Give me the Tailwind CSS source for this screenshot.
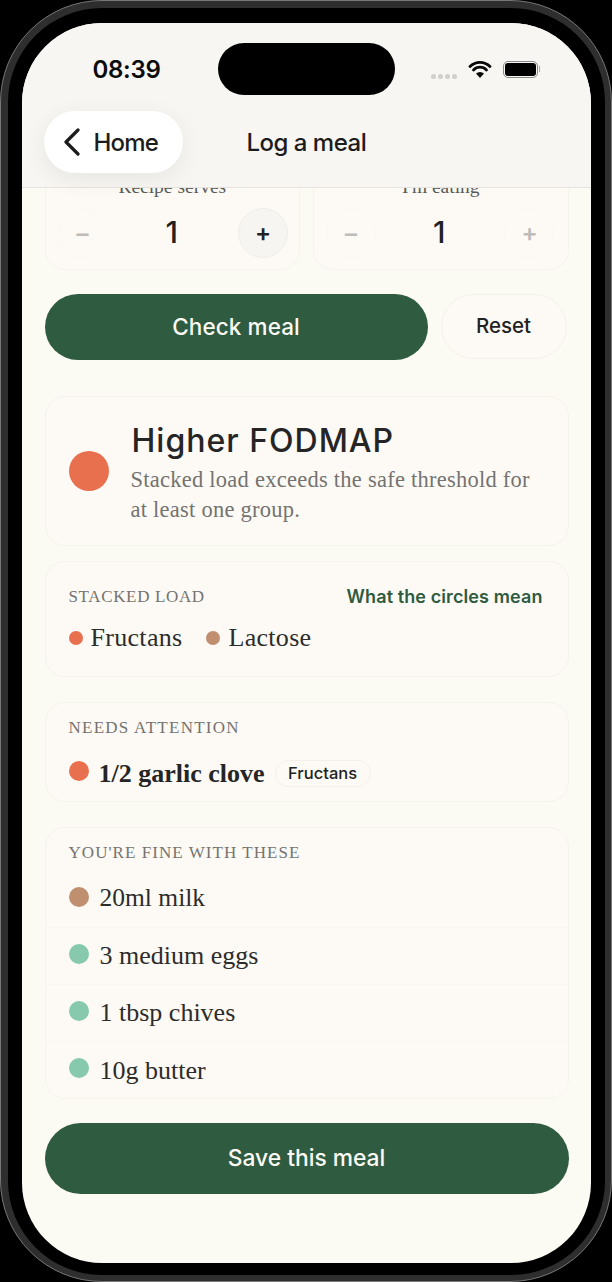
<!doctype html>
<html><head><meta charset="utf-8"><script src="https://cdn.jsdelivr.net/npm/@tailwindcss/browser@4"></script></head>
<body class="bg-black">
<div class="w-[612px] h-[1282px] rounded-[102px] border-[1.5px] border-[#777] bg-[#2e2e2e] p-[6.5px]">
<div class="h-full rounded-[94px] bg-black pl-[14px] pr-[14px] pt-[15px] pb-[12px]">
<div class="h-full rounded-[80px] overflow-hidden bg-[#fbfaf3] flex flex-col relative">
  <header class="h-[165px] shrink-0 bg-[#f7f6f2] border-b border-[#e4e3de] relative z-10 flex flex-col">
    <div class="h-[88px] shrink-0 flex items-start relative">
      <span class="absolute left-[71px] top-[30px] font-['Inter',sans-serif] font-semibold text-[24px] tracking-[-0.3px] leading-[34px] text-[#0b0b0b]">08:39</span>
      <div class="absolute left-[196px] top-[20px] w-[177px] h-[52px] rounded-full bg-black"></div>
      <div class="absolute left-[409px] top-[51px] flex gap-[2px]">
        <i class="w-[5px] h-[5px] rounded-full bg-[#cfcfcc]"></i><i class="w-[5px] h-[5px] rounded-full bg-[#cfcfcc]"></i><i class="w-[5px] h-[5px] rounded-full bg-[#cfcfcc]"></i><i class="w-[5px] h-[5px] rounded-full bg-[#cfcfcc]"></i>
      </div>
      <svg class="absolute left-[446px] top-[37px]" width="24" height="18" viewBox="0 0 24 18"><path d="M2 6.5a14 14 0 0 1 20 0M5.5 10a9 9 0 0 1 13 0" fill="none" stroke="#0a0a0a" stroke-width="2.8" stroke-linecap="round"/><path d="M12 18l-4-4.4a5.6 5.6 0 0 1 8 0z" fill="#0a0a0a"/></svg>
      <div class="absolute left-[481px] top-[38px] w-[35px] h-[17px] rounded-[5px] border border-[#8a8a8a] p-[1px]"><div class="h-full rounded-[3px] bg-black"></div></div>
      <div class="absolute left-[517px] top-[43px] w-[1px] h-[6px] bg-[#aaa]"></div>
    </div>
    <div class="flex items-center h-[62px] ml-[22px]">
      <div class="w-[139px] h-[62px] rounded-full bg-white shadow-[0_6px_24px_rgba(0,0,0,0.07)] flex items-center pl-[19px] gap-[14px]">
        <svg width="17" height="28" viewBox="0 0 17 28"><path d="M15 2L3 14l12 12" fill="none" stroke="#1c1c1c" stroke-width="3.2" stroke-linecap="round" stroke-linejoin="round"/></svg>
        <span class="font-['Inter',sans-serif] font-medium text-[24px] tracking-[-0.8px] leading-[32px] mt-[2px] text-[#1c1c1c]">Home</span>
      </div>
      <span class="ml-[64px] font-['Inter',sans-serif] font-medium text-[24px] tracking-[-0.5px] leading-[32px] mt-[2px] text-[#1c1c1c]">Log a meal</span>
    </div>
  </header>
  <main class="flex-1 overflow-hidden pl-[23px] pr-[22px] flex flex-col">
    <div class="-mt-[40px] h-[122px] shrink-0 flex gap-[13px]">
      <div class="flex-1 rounded-[20px] border border-[#f6f3ee] bg-[#fdfaf6] flex flex-col items-center relative">
        <span class="mt-[27px] font-['Liberation_Serif',serif] text-[19.5px] leading-[22px] text-[#5b5b58] relative">Recipe serves</span>
        <div class="absolute left-[12px] right-[11px] top-[59px] flex items-center justify-between">
          <span class="w-[50px] h-[50px] rounded-full border border-[#faf7f3] flex items-center justify-center font-['Inter',sans-serif] font-medium text-[26px] text-[#bdbcb8]">−</span>
          <span class="font-['Inter',sans-serif] font-medium text-[30px] -ml-[2px] text-[#222]">1</span>
          <span class="w-[50px] h-[50px] rounded-full border border-[#efede8] bg-[#f6f5f1] flex items-center justify-center font-['Inter',sans-serif] font-semibold text-[24px] text-[#222]">+</span>
        </div>
      </div>
      <div class="flex-1 rounded-[20px] border border-[#f6f3ee] bg-[#fdfaf6] flex flex-col items-center relative">
        <span class="mt-[27px] font-['Liberation_Serif',serif] text-[19.5px] leading-[22px] text-[#5b5b58] relative">I'm eating</span>
        <div class="absolute left-[12px] right-[13px] top-[59px] flex items-center justify-between">
          <span class="w-[50px] h-[50px] rounded-full border border-[#faf7f3] flex items-center justify-center font-['Inter',sans-serif] font-medium text-[26px] text-[#bdbcb8]">−</span>
          <span class="font-['Inter',sans-serif] font-medium text-[30px] -ml-[2px] text-[#222]">1</span>
          <span class="w-[50px] h-[50px] rounded-full border border-[#faf7f3] flex items-center justify-center font-['Inter',sans-serif] font-semibold text-[24px] text-[#bdbcb8]">+</span>
        </div>
      </div>
    </div>
    <div class="mt-[24px] h-[66px] shrink-0 flex items-center gap-[13px]">
      <div class="w-[383px] h-[66px] rounded-full bg-[#2f5b40] flex items-center justify-center font-['Inter',sans-serif] font-medium text-[22.5px] tracking-[0.1px] text-[#fbfaf5]">Check meal</div>
      <div class="w-[126px] h-[65px] rounded-full border border-[#f4f1eb] bg-[#fdfaf6] flex items-center justify-center font-['Inter',sans-serif] font-medium text-[20.5px] text-[#222]">Reset</div>
    </div>
    <section class="mt-[36px] h-[150px] shrink-0 rounded-[20px] border border-[#f6f3ee] bg-[#fdfaf6] flex items-center pl-[23px] gap-[23px]">
      <i class="w-[40px] h-[40px] rounded-full bg-[#e8704f] mt-[1px] shrink-0"></i>
      <div class="flex flex-col mt-[3px]">
        <span class="font-['Inter',sans-serif] font-medium text-[32px] tracking-[1px] leading-[44px] text-[#252525]">Higher FODMAP</span>
        <p class="mt-[2px] -ml-[1px] font-['Liberation_Serif',serif] text-[22.5px] tracking-[0.25px] leading-[30px] text-[#74736f]">Stacked load exceeds the safe threshold for<br>at least one group.</p>
      </div>
    </section>
    <section class="mt-[15px] h-[116px] shrink-0 rounded-[20px] border border-[#f6f3ee] bg-[#fdfaf6] pl-[23px] pr-[25px] pt-[24px]">
      <div class="flex justify-between items-center h-[22px]">
        <span class="font-['Liberation_Serif',serif] text-[17px] text-[#74736f] tracking-[0.65px]">STACKED LOAD</span>
        <span class="font-['Inter',sans-serif] font-semibold text-[18px] tracking-[0.1px] text-[#2f5b40]">What the circles mean</span>
      </div>
      <div class="flex items-center mt-[15px] h-[30px]">
        <i class="w-[14px] h-[14px] rounded-full bg-[#e8704f]"></i><span class="ml-[8px] font-['Liberation_Serif',serif] text-[26px] tracking-[0.3px] text-[#2c2c2a]">Fructans</span>
        <i class="ml-[24px] w-[14px] h-[14px] rounded-full bg-[#c08f70]"></i><span class="ml-[8px] font-['Liberation_Serif',serif] text-[26px] tracking-[0.3px] text-[#2c2c2a]">Lactose</span>
      </div>
    </section>
    <section class="mt-[25px] h-[100px] shrink-0 rounded-[20px] border border-[#f6f3ee] bg-[#fdfaf6] px-[23px] pt-[14px]">
      <div class="h-[22px] flex items-center font-['Liberation_Serif',serif] text-[17px] text-[#74736f] tracking-[1.25px]">NEEDS ATTENTION</div>
      <div class="flex items-center mt-[15px] h-[40px]">
        <i class="w-[20px] h-[20px] rounded-full bg-[#e8704f] -mt-[5px]"></i>
        <span class="ml-[10px] font-['Liberation_Serif',serif] font-bold text-[26px] text-[#252525]">1/2 garlic clove</span>
        <span class="ml-[10px] h-[27px] px-[12.5px] rounded-full border border-[#f3f0ea] flex items-center font-['Inter',sans-serif] font-medium text-[16.5px] text-[#222]">Fructans</span>
      </div>
    </section>
    <section class="mt-[25px] h-[272px] shrink-0 rounded-[20px] border border-[#f6f3ee] bg-[#fdfaf6] pt-[14px] flex flex-col">
      <div class="px-[23px] h-[22px] flex items-center font-['Liberation_Serif',serif] text-[17px] text-[#74736f] tracking-[1.05px]">YOU'RE FINE WITH THESE</div>
      <div class="mt-[7px] flex-1 flex flex-col">
        <div class="h-[57px] border-b border-[#f9f6f1] flex items-center px-[23px]"><i class="w-[20px] h-[20px] rounded-full bg-[#c08f70] -mt-[4px]"></i><span class="ml-[11px] font-['Liberation_Serif',serif] text-[25.5px] text-[#2c2c2a]">20ml milk</span></div>
        <div class="h-[57px] border-b border-[#f9f6f1] flex items-center px-[23px]"><i class="w-[20px] h-[20px] rounded-full bg-[#86c9ac] -mt-[4px]"></i><span class="ml-[11px] font-['Liberation_Serif',serif] text-[26px] text-[#2c2c2a]">3 medium eggs</span></div>
        <div class="h-[57px] border-b border-[#f9f6f1] flex items-center px-[23px]"><i class="w-[20px] h-[20px] rounded-full bg-[#86c9ac] -mt-[4px]"></i><span class="ml-[11px] font-['Liberation_Serif',serif] text-[26px] text-[#2c2c2a]">1 tbsp chives</span></div>
        <div class="h-[57px] flex items-center px-[23px]"><i class="w-[20px] h-[20px] rounded-full bg-[#86c9ac] -mt-[4px]"></i><span class="ml-[11px] font-['Liberation_Serif',serif] text-[26px] text-[#2c2c2a]">10g butter</span></div>
      </div>
    </section>
    <div class="mt-[24px] h-[71px] shrink-0 rounded-full bg-[#2f5b40] flex items-center justify-center font-['Inter',sans-serif] font-medium text-[22.8px] text-[#fbfaf5]">Save this meal</div>
  </main>
</div></div></div>
</body></html>
